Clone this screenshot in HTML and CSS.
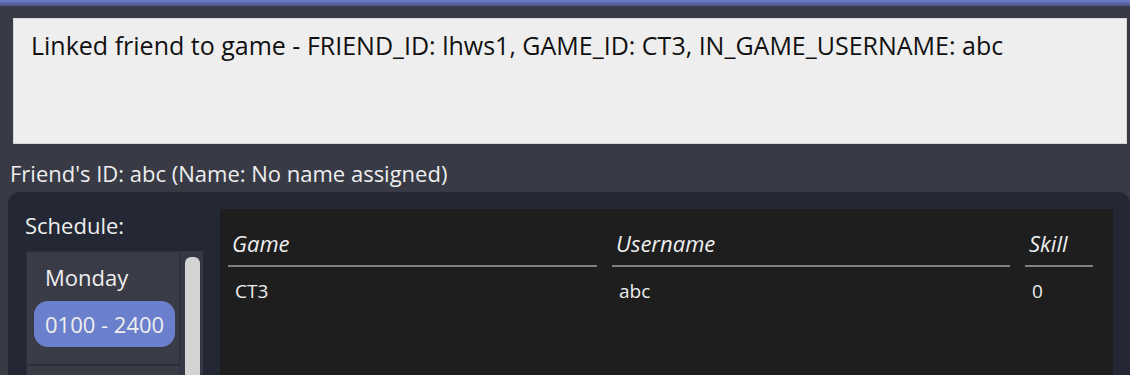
FILE: index.html
```html
<!DOCTYPE html>
<html lang="en">
<head>
  <meta charset="UTF-8">
  <title>Friend details</title>
  <link rel="stylesheet" href="styles.css">
</head>
<body>

<div class="topbar"></div>

<div class="result-box">Linked friend to game - FRIEND_ID: lhws1, GAME_ID: CT3, IN_GAME_USERNAME: abc</div>

<div class="friend-label">Friend's ID: abc (Name: No name assigned)</div>

<div class="panel">
  <div class="schedule">
    <div class="schedule-title">Schedule:</div>
    <div class="day-list">
      <div class="days">
        <div class="day-cell">
          <div class="day-name">Monday</div>
          <div class="time-pill">0100 - 2400</div>
        </div>
        <div class="day-cell"></div>
      </div>
      <div class="scroll-track">
        <div class="scroll-thumb"></div>
      </div>
    </div>
  </div>

  <div class="games">
    <div class="games-grid">
      <div class="th">Game</div>
      <div class="th">Username</div>
      <div class="th">Skill</div>
      <div class="td">CT3</div>
      <div class="td">abc</div>
      <div class="td">0</div>
    </div>
  </div>
</div>

</body>
</html>
```

FILE: styles.css
```css
body {
  margin: 0;
  background: #383b45;
  font-family: "Open Sans", "DejaVu Sans", sans-serif;
  color: #eeeeee;
  height: 375px;
  overflow: hidden;
}
.topbar {
  height: 6px;
  background: linear-gradient(#6f7ed0, #4b5380);
}
.result-box {
  margin: 12px 3px 0 13px;
  height: 126px;
  background: #eeeeee;
  border: 1px solid #d6d6d6;
  color: #111111;
  font-size: 25px;
  line-height: 34px;
  padding: 9px 17px;
  box-sizing: border-box;
}
.friend-label {
  font-size: 22px;
  line-height: 30px;
  padding: 14px 10px 4px;
}
.panel {
  margin-left: 8px;
  background: #232834;
  border-radius: 12px 12px 0 0;
  display: flex;
  gap: 17px;
  padding: 17px 17px 0 17px;
  height: 183px;
  box-sizing: border-box;
}
.schedule {
  width: 178px;
}
.schedule-title {
  font-size: 22px;
  line-height: 30px;
  padding-top: 1px;
  height: 42px;
  box-sizing: border-box;
}
.day-list {
  display: flex;
  margin-left: 1px;
  height: 124px;
  overflow: hidden;
}
.days {
  width: 154px;
  background: #2b2f3a;
}
.day-cell {
  background: #393c47;
  border: 1px solid #2b2f3a;
  height: 114px;
  padding: 10px 4px 0 7px;
  box-sizing: border-box;
}
.day-name {
  font-size: 22px;
  line-height: 30px;
  padding-left: 11px;
  height: 39px;
}
.time-pill {
  background: #6b80cc;
  border-radius: 14px;
  height: 46px;
  line-height: 46px;
  font-size: 22px;
  padding-left: 11px;
}
.scroll-track {
  width: 23px;
  background: #353945;
  padding: 6px 3px 0 5px;
  box-sizing: border-box;
}
.scroll-thumb {
  background: #d3d3d3;
  border-radius: 6px;
  height: 140px;
}
.games {
  flex: 1;
  background: #1e1e1e;
}
.games-grid {
  display: grid;
  grid-template-columns: 369px 398px 68px;
  column-gap: 15px;
  padding: 0 20px 0 8px;
}
.th {
  font-style: italic;
  font-size: 22px;
  line-height: 30px;
  padding: 19px 4px 7px;
  border-bottom: 2px solid #808080;
}
.td {
  font-size: 19px;
  line-height: 30px;
  padding: 9px 7px;
}
```
